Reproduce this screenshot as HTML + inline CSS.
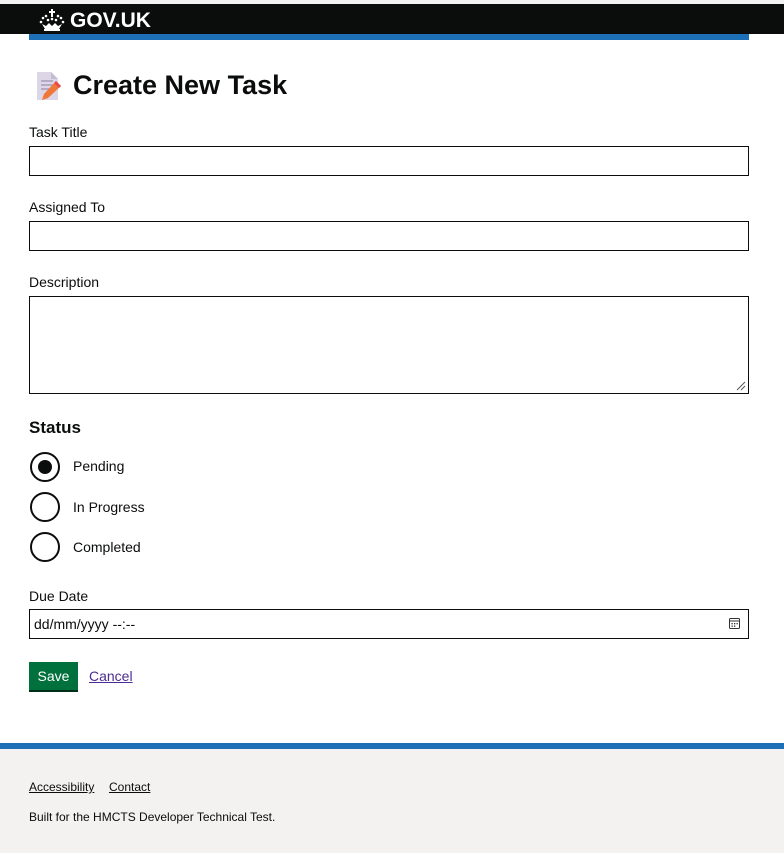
<!DOCTYPE html>
<html><head><meta charset="utf-8"><style>
*{box-sizing:border-box;margin:0;padding:0}
body{width:784px;height:853px;position:relative;background:#fff;font-family:"Liberation Sans",Arial,sans-serif;color:#0b0c0c;overflow:hidden}
.a{position:absolute}
.lbl{font-size:14px;left:29px}
.inp{left:29px;width:720px;border:1px solid #0b0c0c;background:#fff}
.radio{left:30px;width:30px;height:30px;border:2px solid #0b0c0c;border-radius:50%}
.rl{left:73px;font-size:14px}
</style></head><body>
<div class="a" style="left:0;top:0;width:784px;height:4px;background:#f2f2f2"></div>
<div class="a" style="left:0;top:4px;width:784px;height:30px;background:#0b0c0c"></div>
<div class="a" style="left:29px;top:34px;width:720px;height:6px;background:#1d70b8"></div>
<svg class="a" style="left:39px;top:8px" width="26" height="24" viewBox="0 0 26 24">
<g fill="#fff">
<rect x="12" y="1" width="2" height="8"/><rect x="10" y="3" width="6" height="2"/>
<circle cx="4" cy="10" r="1.3"/><circle cx="7" cy="8" r="1.3"/><circle cx="19" cy="8" r="1.3"/><circle cx="22" cy="10" r="1.3"/>
<circle cx="2" cy="14" r="1.3"/><circle cx="24" cy="14" r="1.3"/><circle cx="9" cy="12" r="1.3"/><circle cx="17" cy="12" r="1.3"/><circle cx="13" cy="11" r="1.3"/>
<path d="M3 16 L6 21 L20 21 L23 16 L19 18 L16 15 L13 18 L10 15 L7 18 Z"/>
<rect x="5" y="21" width="16" height="2"/>
</g></svg>
<div class="a" style="left:70px;top:8px;font-size:21px;font-weight:bold;color:#fff;line-height:26px">GOV.UK</div>

<svg class="a" style="left:36px;top:71px" width="26" height="30" viewBox="0 0 26 30">
<path d="M1 1 H15 L22 8 V29 H1 Z" fill="#dcd6e6"/><path d="M15 1 V8 H22" fill="#c4bcd4"/>
<g stroke="#a79cba" stroke-width="1.5"><line x1="5" y1="10" x2="17" y2="10"/><line x1="5" y1="14" x2="17" y2="14"/><line x1="5" y1="18" x2="13" y2="18"/></g>
<path d="M20 10 L25 15 L12 27 L6 29 L8 23 Z" fill="#f0773a"/><path d="M20 10 L25 15 L23 17 L18 12Z" fill="#e94a4a"/>
</svg>
<div class="a" style="left:73px;top:69px;font-size:27px;font-weight:bold;line-height:32px">Create New Task</div>

<div class="a lbl" style="top:124px">Task Title</div>
<div class="a inp" style="top:146px;height:30px"></div>
<div class="a lbl" style="top:199px">Assigned To</div>
<div class="a inp" style="top:221px;height:30px"></div>
<div class="a lbl" style="top:274px">Description</div>
<div class="a inp" style="top:296px;height:98px"></div>
<svg class="a" style="left:736px;top:381px" width="10" height="10"><path d="M1 9 L9 1 M5 9 L9 5" stroke="#555" stroke-width="1"/></svg>

<div class="a" style="left:29px;top:418px;font-size:17px;font-weight:bold">Status</div>
<div class="a radio" style="top:452px"><div class="a" style="left:6px;top:6px;width:14px;height:14px;border-radius:50%;background:#0b0c0c"></div></div>
<div class="a rl" style="top:458px">Pending</div>
<div class="a radio" style="top:492px"></div>
<div class="a rl" style="top:499px">In Progress</div>
<div class="a radio" style="top:532px"></div>
<div class="a rl" style="top:539px">Completed</div>

<div class="a lbl" style="top:588px">Due Date</div>
<div class="a inp" style="top:609px;height:30px"></div>
<div class="a" style="left:34px;top:616px;font-size:14px">dd/mm/yyyy --:--</div>
<svg class="a" style="left:728px;top:617px" width="13" height="13"><rect x="1.5" y="1.5" width="10" height="10" rx="1" fill="none" stroke="#333"/><line x1="1.5" y1="4" x2="11.5" y2="4" stroke="#333"/><g fill="#333"><rect x="3.5" y="6" width="1.3" height="1.3"/><rect x="6" y="6" width="1.3" height="1.3"/><rect x="8.5" y="6" width="1.3" height="1.3"/><rect x="3.5" y="8.5" width="1.3" height="1.3"/><rect x="6" y="8.5" width="1.3" height="1.3"/></g></svg>

<div class="a" style="left:29px;top:662px;width:49px;height:28px;background:#00703c;box-shadow:0 2px 0 #002d18;color:#fff;font-size:14px;text-align:center;line-height:28px">Save</div>
<div class="a" style="left:89px;top:668px;font-size:14px;color:#4c2c92;text-decoration:underline">Cancel</div>

<div class="a" style="left:0;top:743px;width:784px;height:6px;background:#1d70b8"></div>
<div class="a" style="left:0;top:749px;width:784px;height:104px;background:#f3f2f1"></div>
<div class="a" style="left:29px;top:780px;font-size:12px;text-decoration:underline">Accessibility</div>
<div class="a" style="left:109px;top:780px;font-size:12px;text-decoration:underline">Contact</div>
<div class="a" style="left:29px;top:810px;font-size:12px">Built for the HMCTS Developer Technical Test.</div>
</body></html>
